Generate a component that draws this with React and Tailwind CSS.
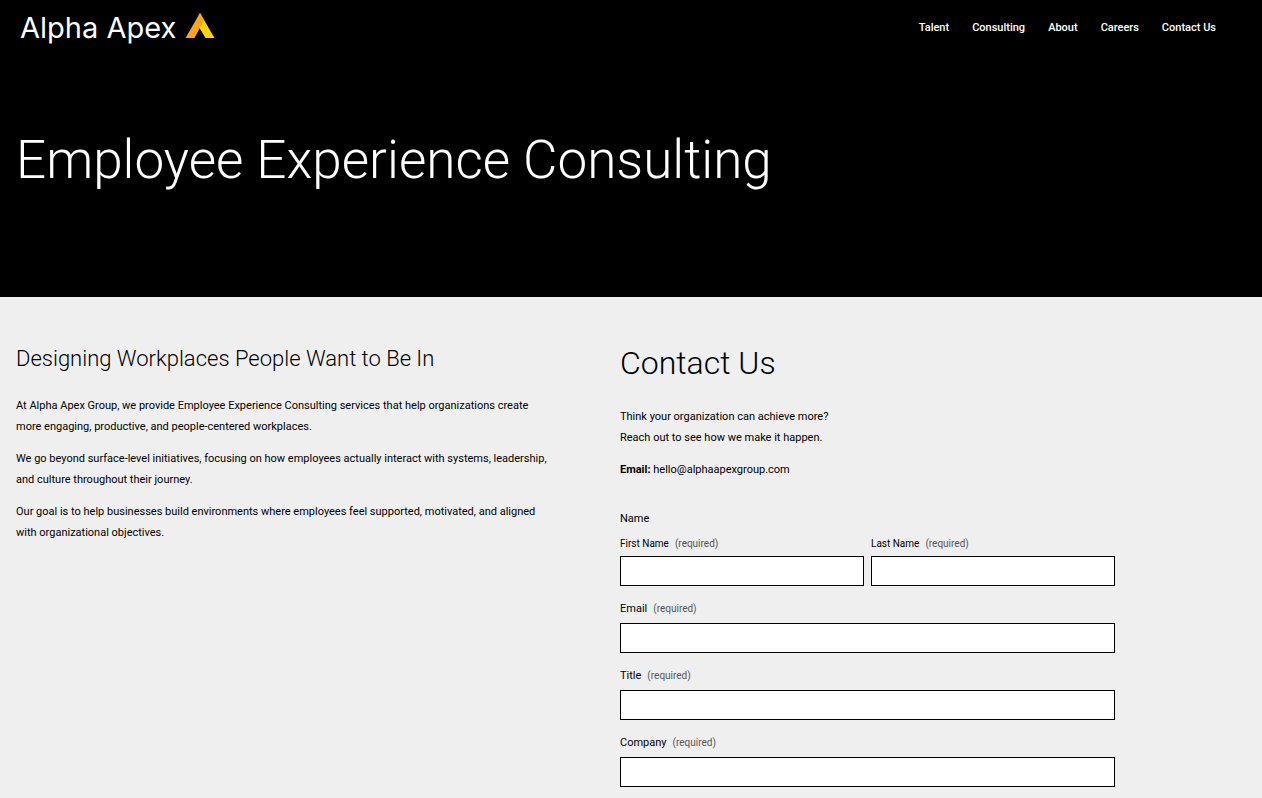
import { useState } from "react";

const navLinks = ["Talent", "Consulting", "About", "Careers", "Contact Us"];

const paragraphs = [
  "At Alpha Apex Group, we provide Employee Experience Consulting services that help organizations create more engaging, productive, and people-centered workplaces.",
  "We go beyond surface-level initiatives, focusing on how employees actually interact with systems, leadership, and culture throughout their journey.",
  "Our goal is to help businesses build environments where employees feel supported, motivated, and aligned with organizational objectives.",
];

const emptyForm = { firstName: "", lastName: "", email: "", title: "", company: "" };

function Logo() {
  return (
    <a href="#home" className="flex items-center gap-[9px] font-[Inter,sans-serif] text-white">
      <span className="text-[29px] leading-8">Alpha Apex</span>
      <svg viewBox="0 0 30 26" className="mb-1 h-[26px] w-[30px]" aria-hidden="true">
        <path d="M15 0 L29.5 25 H20.5 L14.5 15 L11 8 Z" fill="#fcd313" />
        <path d="M15 0 L19 7 L9.5 25 H0.5 Z" fill="#fba519" />
      </svg>
    </a>
  );
}

function Field({ label, name, type = "text", small, form, onChange }) {
  return (
    <div className="min-w-0 flex-1">
      <label
        htmlFor={name}
        className={
          small
            ? "flex h-6 items-baseline gap-[6px] text-[10px] leading-6"
            : "flex h-7 items-baseline gap-[6px] text-[11px] leading-7"
        }
      >
        {label}
        <span className="text-[10px] text-[#555555]">(required)</span>
      </label>
      <input
        id={name}
        name={name}
        type={type}
        value={form[name]}
        onChange={onChange}
        required
        className="block h-[30px] w-full border border-black bg-white px-2 text-[11px] outline-none"
      />
    </div>
  );
}

export default function App() {
  const [form, setForm] = useState(emptyForm);

  function handleChange(e) {
    setForm({ ...form, [e.target.name]: e.target.value });
  }

  const fieldProps = { form, onChange: handleChange };

  return (
    <div className="min-h-screen bg-[#efefef] font-[Roboto,sans-serif] text-black">
      <header className="bg-black text-white">
        <div className="flex h-14 items-center justify-between pr-[46px] pl-5">
          <Logo />
          <nav className="flex gap-[23px] text-[11px] font-medium">
            {navLinks.map((link) => (
              <a key={link} href="#nav">
                {link}
              </a>
            ))}
          </nav>
        </div>
        <h1 className="px-4 pt-[68px] pb-[101px] text-[53px] leading-[72px] font-light">
          Employee Experience Consulting
        </h1>
      </header>

      <main className="grid grid-cols-[604fr_626fr] px-4 pt-12">
        <section className="pr-[68px]">
          <h2 className="text-[22px] leading-7 font-light">
            Designing Workplaces People Want to Be In
          </h2>
          <div className="mt-[22px] flex flex-col gap-[11px] text-[11px] leading-[21px]">
            {paragraphs.map((text) => (
              <p key={text}>{text}</p>
            ))}
          </div>
        </section>

        <section className="pr-[131px]">
          <h2 className="text-[32px] leading-9 font-light">Contact Us</h2>
          <div className="mt-[25px] flex flex-col gap-[11px] text-[11px] leading-[21px]">
            <p>
              Think your organization can achieve more?
              <br />
              Reach out to see how we make it happen.
            </p>
            <p>
              <strong>Email:</strong> hello@alphaapexgroup.com
            </p>
          </div>

          <form className="mt-[26px] flex flex-col gap-[9px]">
            <fieldset>
              <legend className="text-[11px] leading-[26px]">Name</legend>
              <div className="flex gap-[7px]">
                <Field label="First Name" name="firstName" small {...fieldProps} />
                <Field label="Last Name" name="lastName" small {...fieldProps} />
              </div>
            </fieldset>
            <Field label="Email" name="email" type="email" {...fieldProps} />
            <Field label="Title" name="title" {...fieldProps} />
            <Field label="Company" name="company" {...fieldProps} />
          </form>
        </section>
      </main>
    </div>
  );
}
